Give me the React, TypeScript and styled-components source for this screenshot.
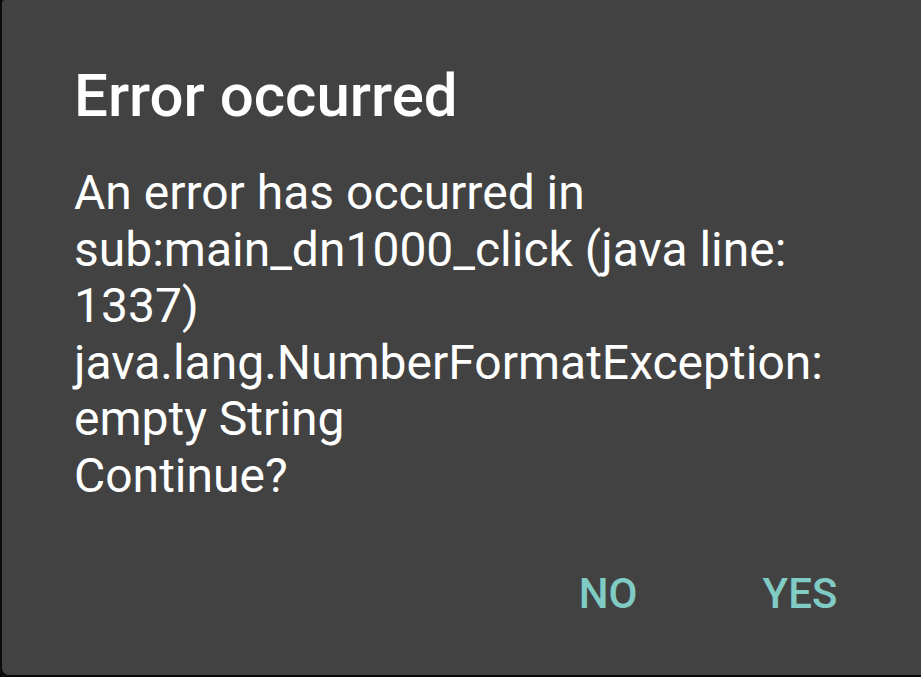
import React from "react";
import styled, { createGlobalStyle } from "styled-components";

const Global = createGlobalStyle`
  html, body {
    margin: 0;
    padding: 0;
    background: #0b0b0b;
    width: 921px;
    height: 677px;
    overflow: hidden;
  }
  body {
    font-family: Roboto, "Noto Sans", "Liberation Sans", sans-serif;
  }
`;

const Screen = styled.div`
  width: 921px;
  height: 677px;
  padding: 0 0 2px 2px;
  box-sizing: border-box;
  display: flex;
`;

const Dialog = styled.div`
  flex: 1;
  background: #424242;
  border-radius: 3px 0 0 7px;
  display: flex;
  flex-direction: column;
  padding: 60px 0 0 72px;
  box-sizing: border-box;
`;

const Title = styled.h1`
  margin: 0;
  font-family: Roboto, "Liberation Sans", sans-serif;
  font-weight: 500;
  font-size: 60px;
  line-height: 72px;
  color: #ffffff;
`;

const Message = styled.div`
  margin-top: 33px;
  font-family: Roboto, "Liberation Sans", sans-serif;
  font-weight: 400;
  font-size: 48px;
  line-height: 56.6px;
  color: #ffffff;
`;

const Line = styled.div`
  white-space: nowrap;
`;

const ButtonBar = styled.div`
  margin-top: 64px;
  display: flex;
  justify-content: flex-end;
  padding-right: 25px;
`;

const TextButton = styled.button`
  min-width: 192px;
  background: none;
  border: none;
  padding: 0;
  font-family: Roboto, "Liberation Sans", sans-serif;
  font-weight: 500;
  font-size: 42px;
  line-height: 50px;
  color: #80cbc4;
  text-transform: uppercase;
  text-align: center;
  cursor: pointer;
`;

const lines = [
  "An error has occurred in",
  "sub:main_dn1000_click (java line:",
  "1337)",
  "java.lang.NumberFormatException:",
  "empty String",
  "Continue?",
];

export default function App() {
  return (
    <>
      <Global />
      <Screen>
        <Dialog>
          <Title>Error occurred</Title>
          <Message>
            {lines.map((l, i) => (
              <Line key={i}>{l}</Line>
            ))}
          </Message>
          <ButtonBar>
            <TextButton>No</TextButton>
            <TextButton>Yes</TextButton>
          </ButtonBar>
        </Dialog>
      </Screen>
    </>
  );
}
